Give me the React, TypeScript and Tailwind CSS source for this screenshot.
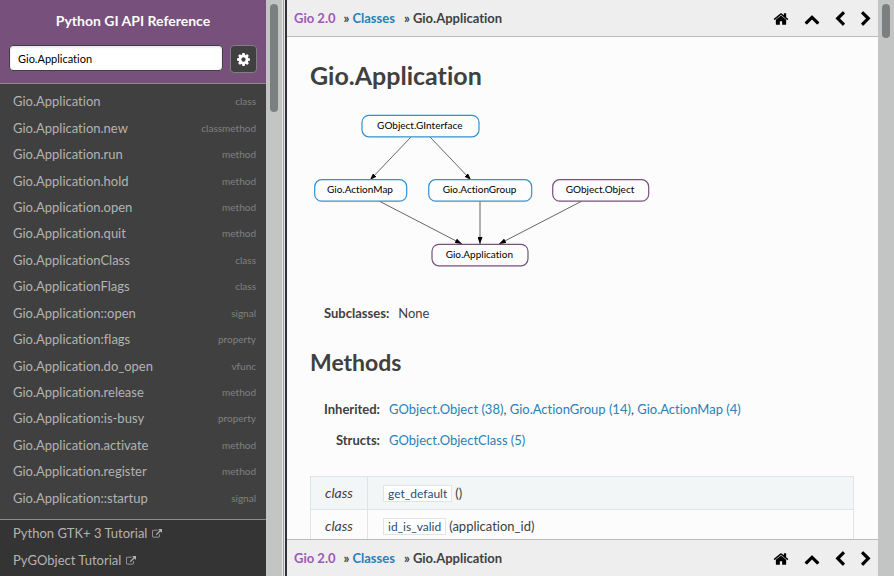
import React from "react";

const HOME =
  "M1472 992v480q0 26-19 45t-45 19h-384v-384h-256v384h-384q-26 0-45-19t-19-45v-480q0-1 .5-3t.5-3l575-474 575 474q1 2 1 6zm223-69l-62 74q-8 9-21 11h-3q-13 0-21-7l-692-577-692 577q-12 8-24 7-13-2-21-11l-62-74q-8-10-7-23.5t11-21.5l719-599q32-26 76-26t76 26l244 204v-195q0-14 9-23t23-9h192q14 0 23 9t9 23v408l219 182q10 8 11 21.5t-7 23.5z";
const UP =
  "M1683 1331l-166 165q-19 19-45 19t-45-19l-531-531-531 531q-19 19-45 19t-45-19l-166-165q-19-19-19-45.5t19-45.5l742-741q19-19 45-19t45 19l742 741q19 19 19 45.5t-19 45.5z";
const LEFT =
  "M1427 301l-531 531 531 531q19 19 19 45t-19 45l-166 166q-19 19-45 19t-45-19l-742-742q-19-19-19-45t19-45l742-742q19-19 45-19t45 19l166 166q19 19 19 45t-19 45z";
const RIGHT =
  "M1363 877l-742 742q-19 19-45 19t-45-19l-166-166q-19-19-19-45t19-45l531-531-531-531q-19-19-19-45t19-45l166-166q19-19 45-19t45 19l742 742q19 19 19 45t-19 45z";
const COG =
  "M1152 896q0-106-75-181t-181-75-181 75-75 181 75 181 181 75 181-75 75-181zm512-109v222q0 12-8 23t-20 13l-185 28q-19 54-39 91 35 50 107 138 10 12 10 25t-9 23q-27 37-99 108t-94 71q-12 0-26-9l-138-108q-44 23-91 38-16 136-29 186-7 28-36 28h-222q-14 0-24.5-8.5t-11.5-21.5l-28-184q-49-16-90-37l-141 107q-10 9-25 9-14 0-25-11-126-114-165-168-7-10-7-23 0-12 8-23 15-21 51-66.5t54-70.5q-27-50-41-99l-183-27q-13-2-21-12.5t-8-23.5v-222q0-12 8-23t19-13l186-28q14-46 39-92-40-57-107-138-10-12-10-24 0-10 9-23 26-36 98.5-107.5t94.5-71.5q13 0 26 10l138 107q44-23 91-38 16-136 29-186 7-28 36-28h222q14 0 24.5 8.5t11.5 21.5l28 184q49 16 90 37l142-107q9-9 24-9 13 0 25 10 129 119 165 170 7 8 7 22 0 12-8 23-15 21-51 66.5t-54 70.5q26 50 41 98l183 28q13 2 21 12.5t8 23.5z";
const EXTERNAL =
  "M1408 928v320q0 119-84.5 203.5t-203.5 84.5h-832q-119 0-203.5-84.5t-84.5-203.5v-832q0-119 84.5-203.5t203.5-84.5h704q14 0 23 9t9 23v64q0 14-9 23t-23 9h-704q-66 0-113 47t-47 113v832q0 66 47 113t113 47h832q66 0 113-47t47-113v-320q0-14 9-23t23-9h64q14 0 23 9t9 23zm384-864v512q0 26-19 45t-45 19-45-19l-176-176-652 652q-10 10-23 10t-23-10l-114-114q-10-10-10-23t10-23l652-652-176-176q-19-19-19-45t19-45 45-19h512q26 0 45 19t19 45z";

function Icon({ d, className }: { d: string; className: string }) {
  return (
    <svg viewBox="0 0 1792 1792" fill="currentColor" className={className} aria-hidden="true">
      <path d={d} />
    </svg>
  );
}

const results: [string, string][] = [
  ["Gio.Application", "class"],
  ["Gio.Application.new", "classmethod"],
  ["Gio.Application.run", "method"],
  ["Gio.Application.hold", "method"],
  ["Gio.Application.open", "method"],
  ["Gio.Application.quit", "method"],
  ["Gio.ApplicationClass", "class"],
  ["Gio.ApplicationFlags", "class"],
  ["Gio.Application::open", "signal"],
  ["Gio.Application:flags", "property"],
  ["Gio.Application.do_open", "vfunc"],
  ["Gio.Application.release", "method"],
  ["Gio.Application:is-busy", "property"],
  ["Gio.Application.activate", "method"],
  ["Gio.Application.register", "method"],
  ["Gio.Application::startup", "signal"],
];

function Scrollbar({ thumb }: { thumb: string }) {
  return (
    <div className="w-4 shrink-0 bg-[#c3c5c4] p-1" aria-hidden="true">
      <div className={`w-2 rounded-full bg-[#7b7f80] ${thumb}`} />
    </div>
  );
}

function Sidebar() {
  return (
    <aside className="flex w-[266px] shrink-0 flex-col bg-[#404040] text-[#b3b3b3]">
      <header className="border-b border-[#8c8c8c] bg-[#77507b] px-[9px] pt-3 pb-[10px]">
        <h1 className="text-center text-sm leading-[18px] font-bold text-[#fcfcfc]">
          Python GI API Reference
        </h1>
        <form className="mt-[15px] flex items-start gap-[7px]" onSubmit={(e) => e.preventDefault()}>
          <input
            type="text"
            aria-label="Search"
            defaultValue="Gio.Application"
            className="h-[26px] min-w-0 flex-1 rounded border border-[#404040] bg-white px-2 text-[11px] text-black shadow-[inset_0_1px_3px_#ddd] outline-none"
          />
          <button
            type="button"
            aria-label="Settings"
            className="flex h-7 w-[27px] items-center justify-center rounded border border-[#808080] bg-[#404040] text-white"
          >
            <Icon d={COG} className="size-[15px]" />
          </button>
        </form>
      </header>
      <ul className="flex flex-1 flex-col pt-1 pb-2">
        {results.map(([name, kind]) => (
          <li key={name} className="flex flex-1">
            <a href="#" className="flex flex-1 items-center justify-between pr-[10px] pl-[13px]">
              <span className="text-[13px] leading-5">{name}</span>
              <span className="text-[10px] leading-5 text-[#808080]">{kind}</span>
            </a>
          </li>
        ))}
      </ul>
      <nav className="border-t border-[#8c8c8c] bg-[#343434] pb-[2px] text-[13px] leading-[27px]">
        {["Python GTK+ 3 Tutorial", "PyGObject Tutorial"].map((t) => (
          <a key={t} href="#" className="flex items-center gap-[5px] pl-[13px]">
            {t}
            <Icon d={EXTERNAL} className="size-[10px]" />
          </a>
        ))}
      </nav>
    </aside>
  );
}

function Toolbar({ edge }: { edge: string }) {
  return (
    <nav
      className={`flex h-[37px] shrink-0 items-center bg-[#eee] pt-px pr-1 pl-[7px] text-[13px] font-bold text-[#404040] ${edge}`}
    >
      <a href="#" className="text-[#9b59b6]">
        Gio 2.0
      </a>
      <span className="pr-[3px] pl-2">»</span>
      <a href="#" className="text-[#2980b9]">
        Classes
      </a>
      <span className="pr-[3px] pl-[9px]">»</span>
      <span className="flex-1">Gio.Application</span>
      <div className="flex items-center text-black">
        <a href="#" aria-label="Home" className="pr-[15px]">
          <Icon d={HOME} className="size-4" />
        </a>
        <a href="#" aria-label="Up" className="pr-3">
          <Icon d={UP} className="size-4" />
        </a>
        <a href="#" aria-label="Previous" className="pr-[10px]">
          <Icon d={LEFT} className="size-4" />
        </a>
        <a href="#" aria-label="Next">
          <Icon d={RIGHT} className="size-4" />
        </a>
      </div>
    </nav>
  );
}

const BLUE = "#3091d1";
const PURPLE = "#77507b";

const nodes = [
  { label: "GObject.GInterface", x: 52, y: 5.3, w: 117, color: BLUE },
  { label: "Gio.ActionMap", x: 4.7, y: 69.7, w: 92, color: BLUE },
  { label: "Gio.ActionGroup", x: 118.7, y: 69.7, w: 103, color: BLUE },
  { label: "GObject.Object", x: 242.7, y: 69.7, w: 96, color: PURPLE },
  { label: "Gio.Application", x: 122, y: 134.3, w: 96, color: PURPLE },
];

const edges = [
  [101, 27, 60, 70],
  [120, 27, 161, 70],
  [69, 91, 152, 134],
  [170, 91, 170, 134],
  [272, 91, 189, 134],
];

function Diagram() {
  return (
    <svg width="345" height="162" viewBox="0 0 345 162" role="img" aria-label="Class hierarchy">
      <defs>
        <marker id="arrow" viewBox="0 0 7 5" refX="7" refY="2.5" markerWidth="7" markerHeight="5" orient="auto" markerUnits="userSpaceOnUse">
          <path d="M0 0L7 2.5L0 5z" />
        </marker>
      </defs>
      {edges.map(([x1, y1, x2, y2]) => (
        <line key={`${x1}-${x2}`} x1={x1} y1={y1} x2={x2} y2={y2} stroke="black" strokeWidth="0.6" markerEnd="url(#arrow)" />
      ))}
      {nodes.map((n) => (
        <g key={n.label}>
          <rect x={n.x} y={n.y} width={n.w} height="21.5" rx="7" fill="#fdfdfd" stroke={n.color} strokeWidth="1.2" />
          <text x={n.x + n.w / 2 - 0.7} y={n.y + 13.6} textAnchor="middle" fontSize="10" fill="black">
            {n.label}
          </text>
        </g>
      ))}
    </svg>
  );
}

const link = "text-[#2980b9]";

function Content() {
  return (
    <main className="min-h-0 flex-1 overflow-hidden pt-[23px] pr-6 pl-[23px] text-[13px] leading-5">
      <h2 className="text-[25px] leading-[30px] font-bold">Gio.Application</h2>
      <div className="mt-5">
        <Diagram />
      </div>
      <dl className="mt-[31px] flex gap-[9px] pl-[14px]">
        <dt className="font-bold">Subclasses:</dt>
        <dd>None</dd>
      </dl>
      <h3 className="mt-6 text-[23px] leading-[30px] font-bold">Methods</h3>
      <dl className="mt-[22px] grid grid-cols-[auto_1fr] gap-x-[9px] gap-y-[11px] pl-[14px]">
        <dt className="text-right font-bold">Inherited:</dt>
        <dd>
          <a href="#" className={link}>GObject.Object (38)</a>,{" "}
          <a href="#" className={link}>Gio.ActionGroup (14)</a>,{" "}
          <a href="#" className={link}>Gio.ActionMap (4)</a>
        </dd>
        <dt className="text-right font-bold">Structs:</dt>
        <dd>
          <a href="#" className={link}>GObject.ObjectClass (5)</a>
        </dd>
      </dl>
      <table className="mt-[26px] w-full border-collapse border border-[#e1e4e5]">
        <tbody>
          {[
            ["get_default", "()"],
            ["id_is_valid", "(application_id)"],
          ].map(([fn, args]) => (
            <tr key={fn} className="h-[33px] border border-[#e1e4e5] odd:bg-[#f3f6f6]">
              <td className="w-[57px] border-r border-[#e1e4e5] text-center text-sm italic">class</td>
              <td className="pl-[15px]">
                <a href="#" className="mr-[3px] inline-block border border-[#e1e4e5] bg-white px-1 text-xs leading-[15px] text-[#1f4e6f]">
                  {fn}
                </a>
                {args}
              </td>
            </tr>
          ))}
        </tbody>
      </table>
    </main>
  );
}

export default function App() {
  return (
    <div className="flex h-screen overflow-hidden bg-[#fcfcfc] font-[Lato,'Liberation_Sans',sans-serif] text-[#404040] [font-variant-ligatures:none]">
      <Sidebar />
      <Scrollbar thumb="h-[108px]" />
      <div className="flex w-[5px] shrink-0 border-r-2 border-l border-r-[#2e3436] border-l-[#e8e8e8]">
        <div className="flex-1 border-r border-[#e8e8e8] bg-[#a0a2a1]" />
      </div>
      <div className="flex min-w-0 flex-1 flex-col">
        <Toolbar edge="border-b border-[#babdb6]" />
        <Content />
        <Toolbar edge="border-t border-[#bbb]" />
      </div>
      <Scrollbar thumb="h-[34px]" />
    </div>
  );
}
